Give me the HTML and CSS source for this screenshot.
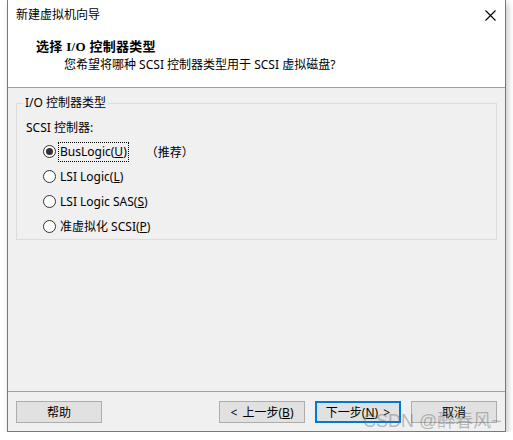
FILE: index.html
```html
<!DOCTYPE html>
<html lang="zh-CN">

<head>
    <meta charset="UTF-8">
    <meta name="viewport" content="width=device-width, initial-scale=1.0">
    <title>新建虚拟机向导</title>
    <link rel="stylesheet" href="styles.css">
</head>

<body>
    <div class="window">
        <div class="titlebar">
            <span class="title">新建虚拟机向导</span>
            <svg class="close" width="11" height="11" viewBox="0 0 11 11">
                <path d="M0.5 0.5 L10.5 10.5 M10.5 0.5 L0.5 10.5" stroke="#000" stroke-width="1.1" fill="none" />
            </svg>
        </div>

        <div class="header">
            <div class="heading">选择 I/O 控制器类型</div>
            <div class="subheading">您希望将哪种 SCSI 控制器类型用于 SCSI 虚拟磁盘?</div>
        </div>

        <div class="content">
            <fieldset class="group">
                <legend>I/O 控制器类型</legend>
                <div class="label">SCSI 控制器:</div>
                <div class="options">
                    <div class="option">
                        <span class="radio checked"></span>
                        <span class="text focus">BusLogic(<u>U</u>)</span>
                        <span class="note">（推荐）</span>
                    </div>
                    <div class="option">
                        <span class="radio"></span>
                        <span class="text">LSI Logic(<u>L</u>)</span>
                    </div>
                    <div class="option">
                        <span class="radio"></span>
                        <span class="text">LSI Logic SAS(<u>S</u>)</span>
                    </div>
                    <div class="option">
                        <span class="radio"></span>
                        <span class="text">准虚拟化 SCSI(<u>P</u>)</span>
                    </div>
                </div>
            </fieldset>
        </div>

        <div class="footer">
            <button class="btn">帮助</button>
            <div class="nav">
                <button class="btn">&lt; 上一步(<u>B</u>)</button>
                <button class="btn default">下一步(<u>N</u>) &gt;</button>
                <button class="btn">取消</button>
            </div>
        </div>

        <div class="watermark">CSDN @醉春风~</div>
    </div>
</body>

</html>
```

FILE: styles.css
```css
* {
    padding: 0;
    margin: 0;
    box-sizing: border-box;
}

body {
    background: #fff;
    font-family: "Noto Sans", "Noto Sans CJK SC", sans-serif;
    font-size: 12px;
    color: #000;
}

.window {
    position: relative;
    width: 499px;
    margin-left: 7px;
    border: 1px solid #7a7a7a;
    border-top: none;
    background: #f0f0f0;
    box-shadow: 2px 3px 6px rgba(0, 0, 0, 0.22);
}

.titlebar {
    height: 30px;
    background: #fff;
    display: flex;
    align-items: center;
    justify-content: space-between;
    padding: 0 9px 0 8px;
}

.titlebar .title {
    line-height: 16px;
}

.header {
    height: 58px;
    background: #fff;
    border-bottom: 1px solid #a0a0a0;
    padding-top: 9px;
}

.heading {
    padding-left: 28px;
    line-height: 16px;
    font-weight: bold;
    font-family: "Liberation Serif", "Noto Sans CJK SC", serif;
    font-size: 13px;
    letter-spacing: 0.3px;
}

.subheading {
    padding-left: 56px;
    margin-top: 2px;
    line-height: 16px;
}

.content {
    height: 304px;
    padding: 7px 8px 0;
    border-bottom: 1px solid #a0a0a0;
}

.group {
    border: 1px solid #dcdcdc;
    padding: 9px 0 0 9px;
}

.group legend {
    line-height: 16px;
    padding: 0 2px;
    margin-left: -3px;
}

.label {
    line-height: 16px;
    margin-bottom: 3px;
}

.options {
    padding-left: 17px;
}

.option {
    height: 25px;
    display: flex;
    align-items: center;
}

.radio {
    width: 13px;
    height: 13px;
    border: 1px solid #333;
    border-radius: 50%;
    background: #fff;
    display: flex;
    align-items: center;
    justify-content: center;
}

.radio.checked::after {
    content: "";
    width: 7px;
    height: 7px;
    border-radius: 50%;
    background: #333;
}

.text {
    margin-left: 3px;
    line-height: 18px;
    padding: 0 1px;
}

.text.focus {
    outline: 1px dotted #000;
}

.note {
    margin-left: 18px;
    font-family: "Noto Sans CJK SC", sans-serif;
}

.footer {
    height: 39px;
    padding: 9px 8px 0;
    display: flex;
    justify-content: space-between;
    align-items: flex-start;
}

.nav {
    display: flex;
    gap: 10px;
}

.btn {
    width: 86px;
    height: 22px;
    border: 1px solid #adadad;
    background: #e1e1e1;
    font-family: "Noto Sans", "Noto Sans CJK SC", sans-serif;
    font-size: 12px;
    color: #000;
    word-spacing: 2px;
}

.btn.default {
    border: 2px solid #0078d7;
}

.watermark {
    position: absolute;
    left: 355px;
    top: 410px;
    font-family: "Liberation Sans", "Noto Sans CJK SC", sans-serif;
    font-size: 18px;
    line-height: 22px;
    color: rgba(110, 110, 110, 0.45);
    white-space: nowrap;
}
```
